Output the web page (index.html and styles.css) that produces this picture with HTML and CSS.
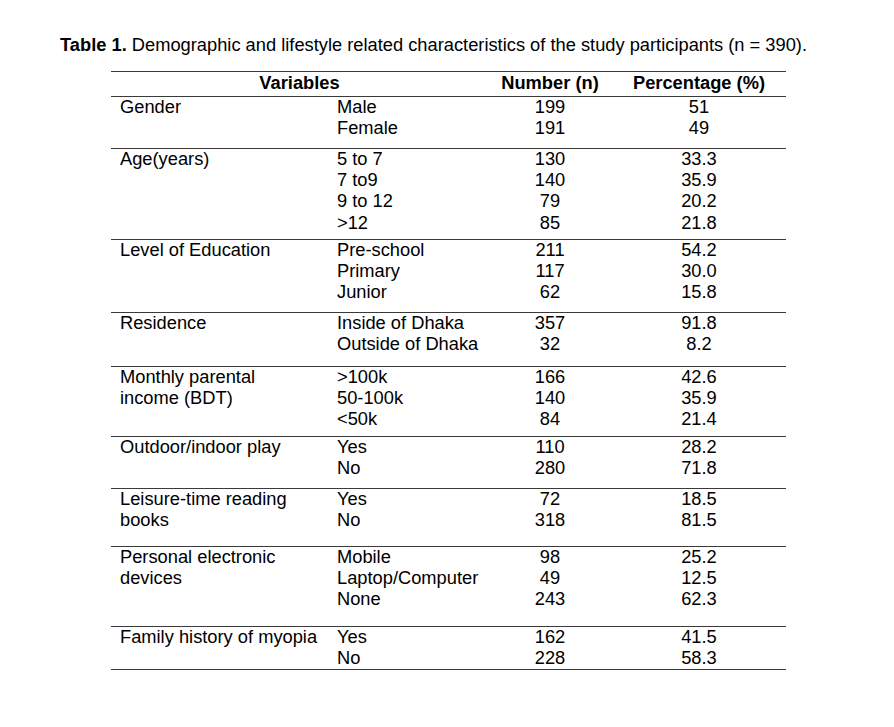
FILE: index.html
```html
<!DOCTYPE html>
<html>
<head>
<meta charset="utf-8">
<link rel="stylesheet" href="styles.css">
</head>
<body>
<p class="caption"><b>Table 1.</b> Demographic and lifestyle related characteristics of the study participants (n = 390).</p>
<div class="table">
  <div class="row head">
    <div class="span2">Variables</div>
    <div class="c">Number (n)</div>
    <div class="c">Percentage (%)</div>
  </div>
  <div class="row h-gender">
    <div class="v">Gender</div>
    <div class="s">Male<br>Female</div>
    <div class="c">199<br>191</div>
    <div class="c">51<br>49</div>
  </div>
  <div class="row h-age">
    <div class="v">Age(years)</div>
    <div class="s">5 to 7<br>7 to9<br>9 to 12<br>&gt;12</div>
    <div class="c">130<br>140<br>79<br>85</div>
    <div class="c">33.3<br>35.9<br>20.2<br>21.8</div>
  </div>
  <div class="row h-edu">
    <div class="v">Level of Education</div>
    <div class="s">Pre-school<br>Primary<br>Junior</div>
    <div class="c">211<br>117<br>62</div>
    <div class="c">54.2<br>30.0<br>15.8</div>
  </div>
  <div class="row h-res">
    <div class="v">Residence</div>
    <div class="s">Inside of Dhaka<br>Outside of Dhaka</div>
    <div class="c">357<br>32</div>
    <div class="c">91.8<br>8.2</div>
  </div>
  <div class="row h-income">
    <div class="v">Monthly parental<br>income (BDT)</div>
    <div class="s">&gt;100k<br>50-100k<br>&lt;50k</div>
    <div class="c">166<br>140<br>84</div>
    <div class="c">42.6<br>35.9<br>21.4</div>
  </div>
  <div class="row h-play">
    <div class="v">Outdoor/indoor play</div>
    <div class="s">Yes<br>No</div>
    <div class="c">110<br>280</div>
    <div class="c">28.2<br>71.8</div>
  </div>
  <div class="row h-read">
    <div class="v">Leisure-time reading<br>books</div>
    <div class="s">Yes<br>No</div>
    <div class="c">72<br>318</div>
    <div class="c">18.5<br>81.5</div>
  </div>
  <div class="row h-dev">
    <div class="v">Personal electronic<br>devices</div>
    <div class="s">Mobile<br>Laptop/Computer<br>None</div>
    <div class="c">98<br>49<br>243</div>
    <div class="c">25.2<br>12.5<br>62.3</div>
  </div>
  <div class="row h-fam">
    <div class="v">Family history of myopia</div>
    <div class="s">Yes<br>No</div>
    <div class="c">162<br>228</div>
    <div class="c">41.5<br>58.3</div>
  </div>
</div>
</body>
</html>
```

FILE: styles.css
```css
html, body {
  margin: 0;
  padding: 0;
  background: #ffffff;
}
body {
  font-family: "Liberation Sans", Arial, sans-serif;
  font-size: 18.3px;
  color: #000000;
}
.caption {
  margin: 0;
  padding: 35px 0 0 60px;
  line-height: 20px;
  white-space: nowrap;
}
.table {
  margin: 16px 0 0 111px;
  width: 675px;
  border-top: 1px solid #3a3a3a;
}
.row {
  display: grid;
  grid-template-columns: 217px 160px 124px 174px;
  border-bottom: 1px solid #3a3a3a;
  line-height: 21.2px;
  box-sizing: border-box;
}
.row > div {
  white-space: nowrap;
  margin-top: -1px;
}
.head {
  height: 25px;
  font-weight: bold;
  line-height: 24px;
}
.span2 {
  grid-column: span 2;
  text-align: center;
}
.v {
  padding-left: 9px;
}
.s {
  padding-left: 9px;
}
.c {
  text-align: center;
}
.h-gender { height: 52px; }
.h-age { height: 91px; }
.h-edu { height: 73px; }
.h-res { height: 54px; }
.h-income { height: 70px; }
.h-play { height: 52px; }
.h-read { height: 58px; }
.h-dev { height: 80px; }
.h-fam { height: 43px; }
```
